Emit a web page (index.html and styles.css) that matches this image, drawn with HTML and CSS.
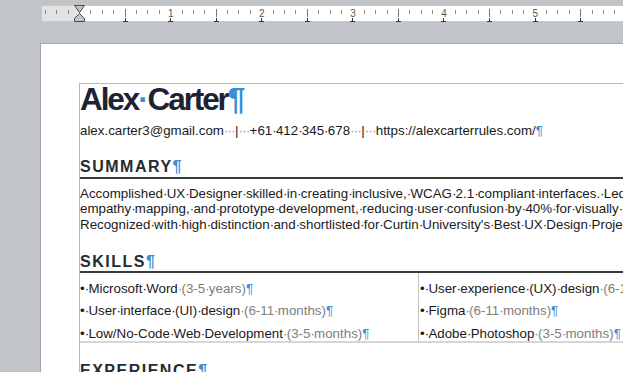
FILE: index.html
```html
<!DOCTYPE html>
<html lang="en">
<head>
<meta charset="utf-8">
<title>Alex Carter - Resume</title>
<link rel="stylesheet" href="styles.css">
</head>
<body>
<div class="ruler-bar">
  <svg class="ruler" width="620" height="17" viewBox="0 0 620 17">
    <rect x="0" y="0" width="620" height="17" fill="#ffffff"/>
    <rect x="0" y="0" width="38.5" height="17" fill="#e3e3e3"/>
    <rect x="0.5" y="0.5" width="640" height="16" fill="none" stroke="#c9c9c9"/>
    <path stroke="#8a8a8a" stroke-width="1" d="M4.5 5v4M15.5 5v4M27.5 5v4M49.5 5v4M61.5 5v4M72.5 5v4M95.5 5v4M106.5 5v4M118.5 5v4M141.5 5v4M152.5 5v4M163.5 5v4M186.5 5v4M197.5 5v4M209.5 5v4M232.5 5v4M243.5 5v4M254.5 5v4M277.5 5v4M289.5 5v4M300.5 5v4M323.5 5v4M334.5 5v4M346.5 5v4M368.5 5v4M380.5 5v4M391.5 5v4M414.5 5v4M425.5 5v4M437.5 5v4M459.5 5v4M471.5 5v4M482.5 5v4M505.5 5v4M516.5 5v4M528.5 5v4M551.5 5v4M562.5 5v4M573.5 5v4"/>
    <path stroke="#777" stroke-width="1" d="M84.5 4v8M175.5 4v8M266.5 4v8M357.5 4v8M448.5 4v8M539.5 4v8"/>
    <g class="ruler-num" fill="#555" text-anchor="middle">
      <text x="129.8" y="12">1</text>
      <text x="220.8" y="12">2</text>
      <text x="312" y="12">3</text>
      <text x="403" y="12">4</text>
      <text x="494.2" y="12">5</text>
      <text x="585.4" y="12">6</text>
    </g>
    <path stroke="#333" stroke-width="1" fill="none" d="M84.5 13v4M82 16.5h5M129.5 13v4M127 16.5h5M175.5 13v4M173 16.5h5M220.5 13v4M218 16.5h5M266.5 13v4M264 16.5h5M311.5 13v4M309 16.5h5M357.5 13v4M355 16.5h5M402.5 13v4M400 16.5h5M448.5 13v4M446 16.5h5M494.5 13v4M492 16.5h5M539.5 13v4M537 16.5h5M585.5 13v4M583 16.5h5"/>
    <path fill="#c4c4c4" stroke="#4a4a4a" stroke-width="1" stroke-linejoin="round" d="M33.5 0.5h10l-5 7z"/>
    <path fill="#c4c4c4" stroke="#4a4a4a" stroke-width="1" stroke-linejoin="round" d="M38.5 8.5l5 5v3h-10v-3z"/>
  </svg>
</div>

<div class="page">
  <div class="frame">
    <h1 class="name">Alex<span class="s mark">·</span>Carter<span class="pil">¶</span></h1>
    <p class="contact">alex.carter3@gmail.com<span class="dots"><span class="s">·</span><span class="s">·</span><span class="s">·</span></span>|<span class="dots"><span class="s">·</span><span class="s">·</span><span class="s">·</span></span>+61<span class="s">·</span>412<span class="s">·</span>345<span class="s">·</span>678<span class="dots"><span class="s">·</span><span class="s">·</span><span class="s">·</span></span>|<span class="dots"><span class="s">·</span><span class="s">·</span><span class="s">·</span></span>https://alexcarterrules.com/<span class="pil">¶</span></p>

    <h2 class="section-title">SUMMARY<span class="pil">¶</span></h2>
    <p class="summary">Accomplished<span class="s">·</span>UX<span class="s">·</span>Designer<span class="s">·</span>skilled<span class="s">·</span>in<span class="s">·</span>creating<span class="s">·</span>inclusive,<span class="s">·</span>WCAG<span class="s">·</span>2.1<span class="s">·</span>compliant<span class="s">·</span>interfaces.<span class="s">·</span>Led<span class="s">·</span>user<span class="s">·</span>research,<span class="s">·</span><br>empathy<span class="s">·</span>mapping,<span class="s">·</span>and<span class="s">·</span>prototype<span class="s">·</span>development,<span class="s">·</span>reducing<span class="s">·</span>user<span class="s">·</span>confusion<span class="s">·</span>by<span class="s">·</span>40%<span class="s">·</span>for<span class="s">·</span>visually<span class="s">·</span>impaired<span class="s">·</span>users.<span class="s">·</span><br>Recognized<span class="s">·</span>with<span class="s">·</span>high<span class="s">·</span>distinction<span class="s">·</span>and<span class="s">·</span>shortlisted<span class="s">·</span>for<span class="s">·</span>Curtin<span class="s">·</span>University's<span class="s">·</span>Best<span class="s">·</span>UX<span class="s">·</span>Design<span class="s">·</span>Project.<span class="pil">¶</span></p>

    <h2 class="section-title skills-title">SKILLS<span class="pil">¶</span></h2>
    <div class="skills">
      <div class="skill-col">
        <p class="skill">•<span class="s">·</span>Microsoft<span class="s">·</span>Word<span class="muted"><span class="s">·</span>(3-5<span class="s">·</span>years)</span><span class="pil">¶</span></p>
        <p class="skill">•<span class="s">·</span>User<span class="s">·</span>interface<span class="s">·</span>(UI)<span class="s">·</span>design<span class="muted"><span class="s">·</span>(6-11<span class="s">·</span>months)</span><span class="pil">¶</span></p>
        <p class="skill">•<span class="s">·</span>Low/No-Code<span class="s">·</span>Web<span class="s">·</span>Development<span class="muted"><span class="s">·</span>(3-5<span class="s">·</span>months)</span><span class="pil">¶</span></p>
      </div>
      <div class="skill-col skill-col-right">
        <p class="skill">•<span class="s">·</span>User<span class="s">·</span>experience<span class="s">·</span>(UX)<span class="s">·</span>design<span class="muted"><span class="s">·</span>(6-11<span class="s">·</span>months)</span><span class="pil">¶</span></p>
        <p class="skill">•<span class="s">·</span>Figma<span class="muted"><span class="s">·</span>(6-11<span class="s">·</span>months)</span><span class="pil">¶</span></p>
        <p class="skill">•<span class="s">·</span>Adobe<span class="s">·</span>Photoshop<span class="muted"><span class="s">·</span>(3-5<span class="s">·</span>months)</span><span class="pil">¶</span></p>
      </div>
    </div>

    <h2 class="section-title exp-title">EXPERIENCE<span class="pil">¶</span></h2>
  </div>
</div>
</body>
</html>
```

FILE: styles.css
```css
html, body {
  margin: 0;
  padding: 0;
}

body {
  background: #c1c4c8;
  overflow: hidden;
  width: 623px;
  height: 372px;
  font-family: "Liberation Sans", Arial, sans-serif;
  color: #1a1a1a;
}

.ruler-bar {
  padding: 5px 0 0 41px;
  height: 17px;
}

.ruler {
  display: block;
}

.ruler-num {
  font-family: "Liberation Sans", Arial, sans-serif;
  font-size: 10px;
}

.page {
  margin: 21px 0 0 40px;
  width: 900px;
  height: 400px;
  background: #ffffff;
  border-top: 1px solid #a4a6a9;
  border-left: 1px solid #a4a6a9;
  padding: 39px 0 0 38px;
  box-sizing: border-box;
}

.frame {
  border-top: 1px solid #b8b8b8;
  border-left: 1px solid #b8b8b8;
  height: 400px;
}

/* a space shown as a formatting dot: keeps the width of a space */
.s {
  display: inline-block;
  width: 0.278em;
  text-align: center;
  letter-spacing: 0;
}

.pil {
  color: #3a8ed4;
}

.name {
  margin: 0;
  font-size: 31.5px;
  line-height: 30px;
  font-weight: bold;
  letter-spacing: -2.1px;
  color: #1d2333;
  white-space: nowrap;
}

.name .s {
  width: 0.3em;
}

.mark {
  color: #3a8ed4;
}

.contact {
  margin: 9px 0 0;
  font-size: 13.33px;
  line-height: 15.33px;
  white-space: nowrap;
  color: #1a1a1a;
}

.dots {
  color: #7f93ad;
}

.section-title {
  margin: 20px 0 0;
  font-size: 16px;
  line-height: 18.4px;
  font-weight: bold;
  letter-spacing: 1.5px;
  color: #262a33;
  border-bottom: 2px solid #3a3a3a;
  white-space: nowrap;
}

.skills-title {
  margin-top: 21px;
}

.exp-title {
  margin-top: 19px;
  border-bottom: none;
}

.summary {
  margin: 7px 0 0;
  font-size: 13.33px;
  line-height: 15.4px;
  white-space: nowrap;
  color: #1a1a1a;
}

.skills {
  display: grid;
  grid-template-columns: 338px 400px;
  border-bottom: 2px solid #d6d6d6;
}

.skill-col-right {
  border-left: 1px solid #c2c2c2;
  padding-left: 1px;
}

.skill {
  margin: 0;
  padding-top: 7.3px;
  font-size: 13.33px;
  line-height: 15.33px;
  white-space: nowrap;
  color: #1a1a1a;
}

.muted {
  color: #7d7d7d;
}
```
